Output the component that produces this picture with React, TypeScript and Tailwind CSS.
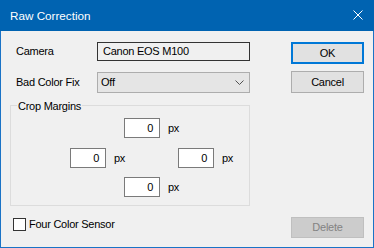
import React from 'react';

function MarginField({ className = '' }: { className?: string }) {
  return (
    <div className={`flex items-center ${className}`}>
      <div className="w-[36px] h-[20px] border border-[#7a7a7a] bg-white flex items-center justify-end pr-[6px]">0</div>
      <span className="ml-[8px]">px</span>
    </div>
  );
}

export default function App() {
  return (
    <div
      className="w-[374px] h-[248px] flex flex-col border border-t-0 border-[#1a73c6] bg-[#f0f0f0] text-[11px] tracking-[-0.25px] text-black leading-[13px] select-none"
      style={{ fontFamily: '"Liberation Sans", Arial, sans-serif' }}
    >
      {/* Title bar */}
      <div className="h-[31px] -mx-px bg-[#0063b1] flex items-center justify-between pl-[10px] pr-[11px] text-white text-[11.7px] tracking-normal">
        <span className="pb-px">Raw Correction</span>
        <svg width="10" height="10" viewBox="0 0 10 10" className="mb-px">
          <path d="M0.5 0.5 L9.5 9.5 M9.5 0.5 L0.5 9.5" stroke="white" strokeWidth="1" fill="none" />
        </svg>
      </div>

      {/* Body */}
      <div className="flex-1 flex">
        {/* Left column */}
        <div className="ml-[9px] w-[240px] flex flex-col">
          <div className="mt-[11px] flex items-center h-[19px]">
            <span className="w-[87px] pl-[6px]">Camera</span>
            <div className="w-[153px] h-[19px] border border-[#333333] flex items-center pl-[5px]">Canon EOS M100</div>
          </div>

          <div className="mt-[11px] flex items-center h-[21px]">
            <span className="w-[87px] pl-[6px]">Bad Color Fix</span>
            <div className="w-[153px] h-[21px] border border-[#adadad] bg-[#e5e5e5] flex items-center justify-between pl-[3px] pr-[5px]">
              <span>Off</span>
              <svg width="9" height="5" viewBox="0 0 9 5">
                <path d="M0.5 0.5 L4.5 4.5 L8.5 0.5" stroke="#505050" strokeWidth="1" fill="none" />
              </svg>
            </div>
          </div>

          {/* Crop Margins group */}
          <div className="relative mt-[12px] h-[101px] border border-[#dcdcdc] flex flex-col">
            <span className="absolute -top-[6px] left-[6px] px-[1px] bg-[#f0f0f0]">Crop Margins</span>
            <MarginField className="mt-[12px] ml-[113px]" />
            <div className="mt-[10px] flex">
              <MarginField className="ml-[59px] w-[108px]" />
              <MarginField />
            </div>
            <MarginField className="mt-[9px] ml-[113px]" />
          </div>

          <div className="mt-[12px] flex items-center">
            <div className="ml-[3px] w-[13px] h-[13px] border border-[#333333] bg-white" />
            <span className="ml-[3px]">Four Color Sensor</span>
          </div>
        </div>

        {/* Right column */}
        <div className="ml-[41px] w-[73px] flex flex-col">
          <button className="mt-[11px] h-[22px] border-2 border-[#0078d7] bg-[#e1e1e1] flex items-center justify-center">OK</button>
          <button className="mt-[7px] h-[22px] border border-[#adadad] bg-[#e1e1e1] flex items-center justify-center">Cancel</button>
          <button className="mt-auto mb-[9px] h-[21px] border border-[#bfbfbf] bg-[#cccccc] text-[#838383] flex items-center justify-center">Delete</button>
        </div>
      </div>
    </div>
  );
}
